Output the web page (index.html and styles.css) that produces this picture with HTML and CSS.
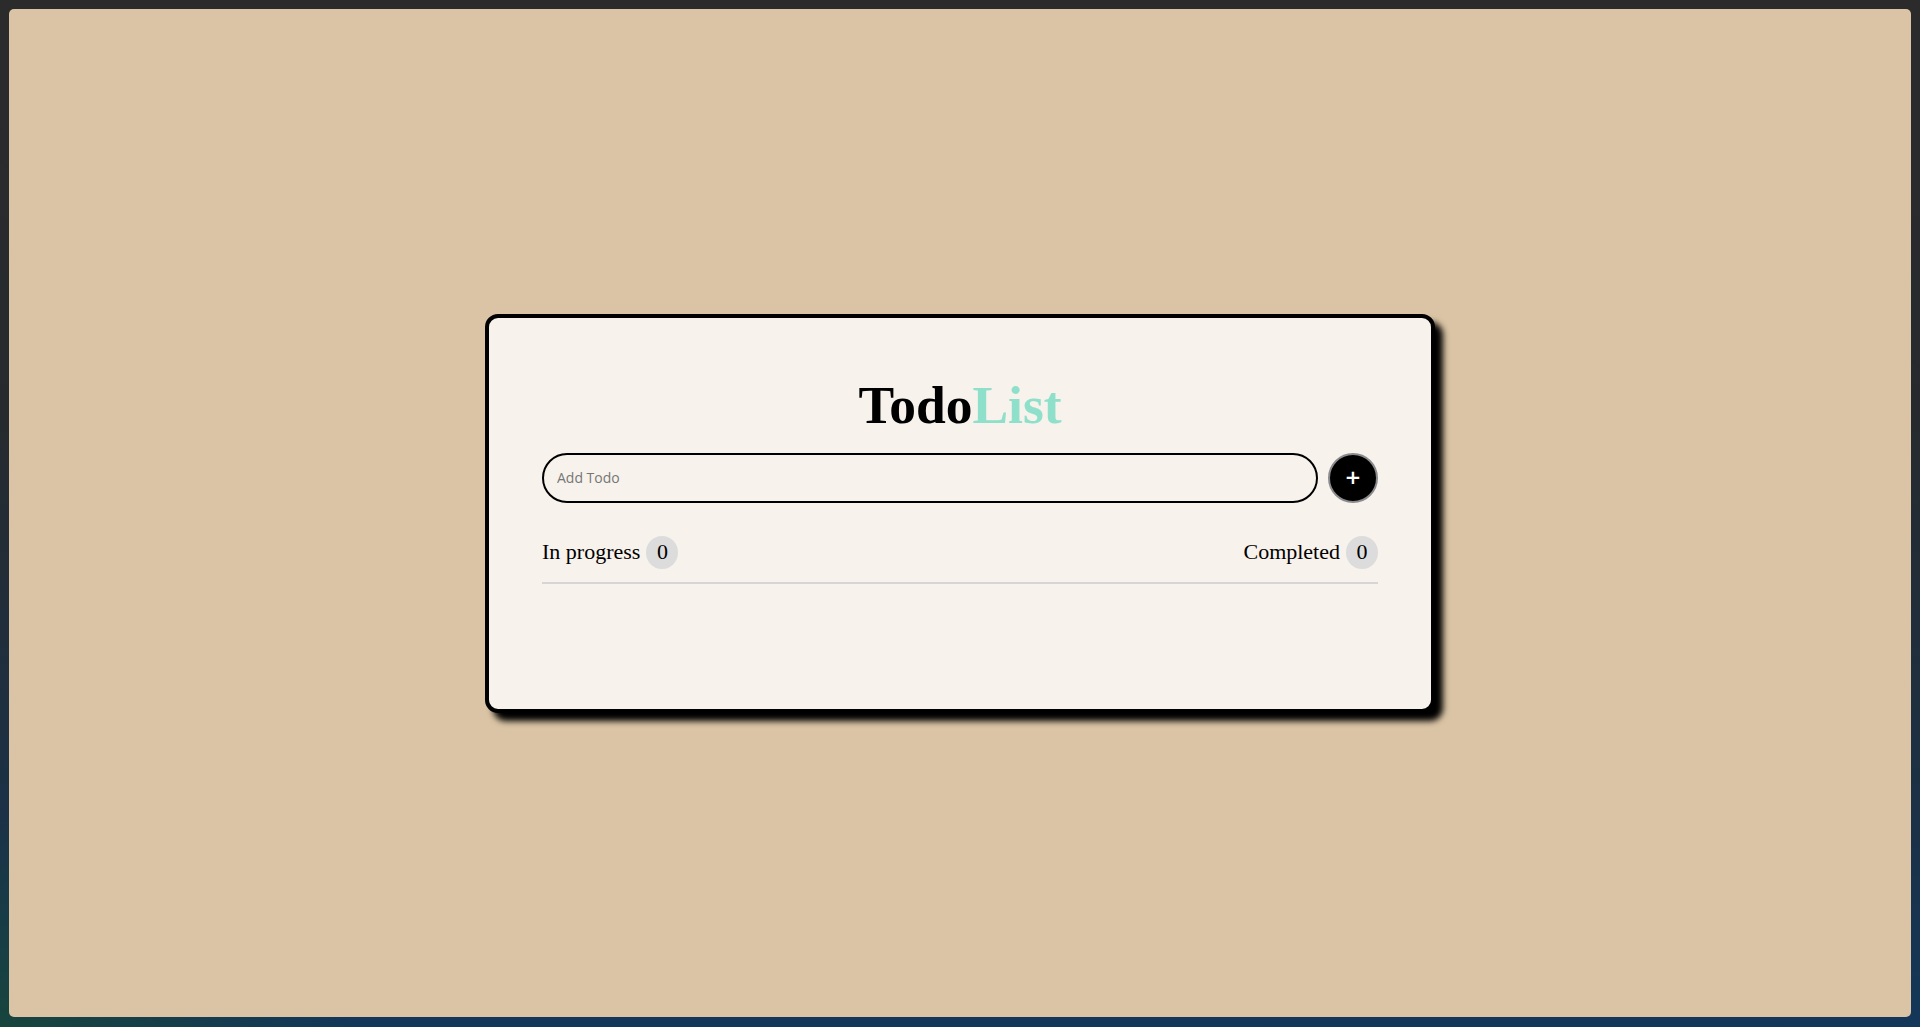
FILE: index.html
```html
<!DOCTYPE html>
<html lang="en">
<head>
<meta charset="utf-8">
<title>TodoList</title>
<link rel="stylesheet" href="styles.css">
</head>
<body>
<div class="window">
  <div class="card">
    <h1 class="title"><span class="title-dark">Todo</span><span class="title-accent">List</span></h1>
    <form class="add-row" onsubmit="return false">
      <input class="add-input" type="text" placeholder="Add Todo">
      <button class="add-btn" type="button">+</button>
    </form>
    <div class="stats">
      <div class="stat"><span class="stat-label">In progress</span><span class="badge">0</span></div>
      <div class="stat"><span class="stat-label">Completed</span><span class="badge">0</span></div>
    </div>
    <ul class="todo-list"></ul>
  </div>
</div>
</body>
</html>
```
FILE: styles.css
```css
* { box-sizing: border-box; }
html, body { margin: 0; padding: 0; height: 100%; }
body {
  background:
    radial-gradient(ellipse 500px 300px at 0% 100%, rgba(24, 70, 58, 0.9), rgba(24, 70, 58, 0) 70%),
    linear-gradient(to bottom, #2b2b2c 0%, #262a2e 40%, #1b3147 80%, #13375a 100%);
  padding: 9px;
  font-family: "Liberation Serif", "Times New Roman", serif;
}
.window {
  height: 1008px;
  background: #dac4a5;
  border-radius: 5px;
  display: flex;
  align-items: center;
  justify-content: center;
}
.card {
  width: 950px;
  background: #f7f2eb;
  border: 4px solid #000;
  border-radius: 13px;
  box-shadow: 8px 8px 6px #000;
  padding: 56px 53px 0;
  display: flex;
  flex-direction: column;
}
.title {
  margin: 0 0 17px;
  font-size: 53.5px;
  font-weight: bold;
  line-height: normal;
  text-align: center;
}
.title-dark { color: #000; }
.title-accent { color: #8fe0ca; }
.add-row {
  margin: 0;
  display: flex;
  gap: 10px;
  height: 50px;
}
.add-input {
  flex: 1;
  height: 50px;
  border: 2px solid #000;
  border-radius: 25px;
  background: #f7f2eb;
  padding: 0 13px;
  font-family: "Open Sans", "Noto Sans", sans-serif;
  font-size: 14px;
  color: #000;
  outline: none;
}
.add-input::placeholder { color: #767676; }
.add-btn {
  width: 50px;
  height: 50px;
  border-radius: 50%;
  background: #000;
  border: 2px solid #8a8a8f;
  color: #fff;
  font-family: "Open Sans", "Noto Sans", sans-serif;
  font-size: 26px;
  font-weight: 600;
  line-height: 1;
  padding: 0 0 2px;
  display: flex;
  align-items: center;
  justify-content: center;
}
.stats {
  margin-top: 33px;
  display: flex;
  justify-content: space-between;
  align-items: center;
  padding-bottom: 13px;
  border-bottom: 2px solid #d6d6d6;
}
.stat {
  display: flex;
  align-items: center;
  gap: 6px;
  font-size: 22px;
  color: #000;
}
.badge {
  width: 32px;
  height: 33px;
  border-radius: 50%;
  background: #dcdcdc;
  display: flex;
  align-items: center;
  justify-content: center;
}
.todo-list {
  margin: 0;
  padding: 0;
  list-style: none;
  height: 125px;
}
```
